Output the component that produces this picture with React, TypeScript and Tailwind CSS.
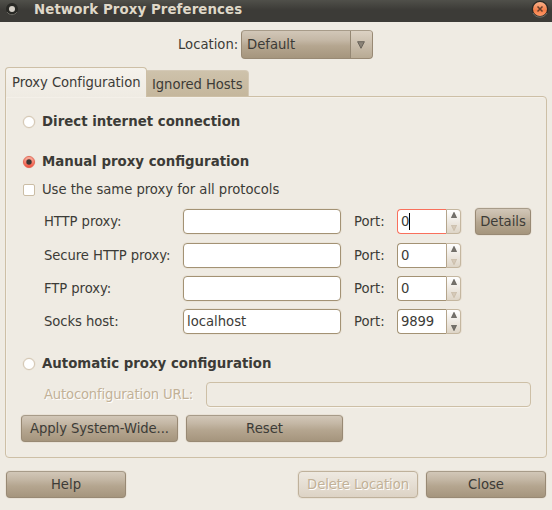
import type { ReactNode } from "react";

function Button({ children, className = "", disabled = false }: { children: ReactNode; className?: string; disabled?: boolean }) {
  const tone = disabled
    ? "border-[#bfb19b] bg-gradient-to-b from-[#eee9e1] to-[#ddd3c5] text-[#c2b197] tracking-[-0.1px] [text-shadow:1px_1px_0_#fff]"
    : "border-[#988974] border-t-[#a79b89] bg-[linear-gradient(#d2c7b8_0%,#c4b7a5_30%,#b5a690_55%,#a5957d_100%)] text-[#3c3b37]";
  return (
    <button className={`flex h-[27px] shrink-0 items-center justify-center rounded-[4px] border whitespace-nowrap shadow-[0_0_0_1px_#e9e2d7] ${tone} ${className}`}>
      {children}
    </button>
  );
}

function Radio({ checked = false }: { checked?: boolean }) {
  return (
    <svg className="h-[14px] w-[14px] shrink-0" viewBox="0 0 14 14">
      <defs>
        <linearGradient id="radioFill" x1="0" y1="0" x2="0" y2="1">
          <stop offset="0" stopColor="#f9b5a5" />
          <stop offset="1" stopColor="#f3503c" />
        </linearGradient>
      </defs>
      <circle cx="7" cy="7" r="6.5" fill="#e5ddd0" />
      <circle cx="7" cy="7" r="5.5" fill={checked ? "url(#radioFill)" : "#fff"} stroke={checked ? "#e35d4d" : "#d0c2ad"} strokeWidth="0.9" />
      {checked && <circle cx="7" cy="7" r="2.7" fill="#3c3634" />}
    </svg>
  );
}

function ChoiceHeading({ children, checked = false }: { children: ReactNode; checked?: boolean }) {
  return (
    <div className="flex h-[20px] items-center gap-[6px] pl-px text-[13.33px] font-bold">
      <Radio checked={checked} />
      <span>{children}</span>
    </div>
  );
}

function Arrow({ up = false, dim = false }: { up?: boolean; dim?: boolean }) {
  return (
    <svg className="h-[6px] w-[6px]" viewBox="0 0 6 6">
      <path d={up ? "M3 .3 5.6 5.7H.4Z" : "M3 5.7 5.6.3H.4Z"} fill={dim ? "#d5c9b8" : "#77736c"} stroke={dim ? "#c2b49d" : "#4e4b46"} strokeWidth="0.6" />
    </svg>
  );
}

function ProxyRow({ label, host = "", port, focused = false }: { label: string; host?: string; port: string; focused?: boolean }) {
  return (
    <div className="flex h-[25px] items-center">
      <span className="w-[139px] shrink-0 tracking-[-0.07px] whitespace-nowrap">{label}</span>
      <div className="flex h-[25px] w-[158px] shrink-0 items-center rounded-[4px] border border-[#a39274] bg-white pl-[3px] shadow-[0_0_0_1px_#eae4d9]">{host}</div>
      <span className="ml-[13px] w-[43px] shrink-0">Port:</span>
      <div className={`flex h-[25px] w-[49px] shrink-0 items-center rounded-l-[4px] border border-r-0 bg-white pl-[3px] ${focused ? "border-[#f9705c]" : "border-[#a39274]"}`}>
        <span className="tracking-[-0.15px]">{port}</span>
        {focused && <i className="h-[17px] w-px bg-black" />}
      </div>
      <div className="flex h-[25px] w-[15px] shrink-0 flex-col items-center justify-between rounded-r-[4px] border border-[#c4b69f] border-l-[#b5a58c] bg-gradient-to-b from-white to-[#ded5c7] pt-[2px] pb-[2px] shadow-[1px_0_0_#e8e0d4]">
        <Arrow up />
        <Arrow dim={port === "0"} />
      </div>
      {focused && <Button className="ml-[14px] w-[56px]">Details</Button>}
    </div>
  );
}

export default function App() {
  return (
    <div className="h-[510px] w-[552px] overflow-hidden bg-[#efebe3] font-['DejaVu_Sans',sans-serif] text-[13.2px] leading-[18px] text-[#3c3b37]">
      <header className="flex h-[22px] items-center bg-[linear-gradient(#50504a,#3c3b37_45%,#3c3b37)] pb-[4px] pl-[6px] text-[13.33px] font-bold text-[#dfd8c8]">
        <svg className="h-[14px] w-[14px]" viewBox="0 0 14 14">
          <circle cx="6" cy="7" r="6" fill="#292925" />
          <path d="M1 10a6 6 0 0 0 10 0" fill="none" stroke="#6b6962" />
          <circle cx="6" cy="7" r="3" fill="#d5d0c7" />
        </svg>
        <span className="ml-[14px] grow pt-[2px] tracking-[0.1px] whitespace-nowrap">Network Proxy Preferences</span>
        <svg className="mr-[3px] h-[18px] w-[18px] shrink-0" viewBox="0 0 18 18">
          <defs>
            <linearGradient id="closeFill" x1="0" y1="0" x2="0" y2="1">
              <stop offset="0" stopColor="#f9b18a" /><stop offset=".6" stopColor="#f47d48" /><stop offset="1" stopColor="#ff9a68" />
            </linearGradient>
          </defs>
          <circle cx="9" cy="9" r="8.3" fill="#292925" />
          <path d="M2 13a8 8 0 0 0 14 0" fill="none" stroke="#77736b" />
          <circle cx="9" cy="9" r="7" fill="url(#closeFill)" />
          <path d="m6.5 6.5 5 5m0-5-5 5" stroke="#653d2b" strokeWidth="1.5" />
        </svg>
      </header>

      <div className="mt-[8px] flex h-[29px] items-center pl-[178px]">
        <span className="w-[63px]">Location:</span>
        <div className="flex h-[29px] w-[132px] overflow-hidden rounded-[4px] border border-[#988974] border-t-[#a79b89] bg-[linear-gradient(#d2c7b8,#c4b7a5_35%,#b5a690_55%,#a5957d)]">
          <span className="flex grow items-center pl-[5px]">Default</span>
          <span className="flex w-[22px] items-center justify-center border-l border-[#948773] bg-gradient-to-b from-[#dcd2c4] to-[#b8aa94] pr-[2px]">
            <svg className="h-[8px] w-[8px]" viewBox="0 0 8 8"><path d="M.6.7h6.8L4 7.3Z" fill="#8b8377" stroke="#625c53" strokeWidth=".9" /></svg>
          </span>
        </div>
      </div>

      <nav className="relative z-10 mt-[8px] flex h-[30px] items-end pl-[5px]">
        <span className="flex h-[30px] w-[142px] items-center rounded-t-[4px] border border-b-0 border-[#cdbfa6] bg-gradient-to-b from-[#f5f2ec] to-[#efebe3] pl-[6px] tracking-[-0.07px] whitespace-nowrap">Proxy Configuration</span>
        <span className="mb-px flex h-[26px] w-[102px] items-center rounded-tr-[4px] border border-b-0 border-l-0 border-[#d4c9b6] bg-gradient-to-b from-[#cec2ab] to-[#c5b79d] pt-[3px] pl-[5px] tracking-[-0.07px] whitespace-nowrap">Ignored Hosts</span>
      </nav>

      <main className="-mt-px ml-[5px] h-[362px] w-[542px] rounded-[4px] rounded-tl-none border border-[#cdbfa6] pt-[15px] pl-[15px] shadow-[inset_1px_1px_0_#f4f0e9]">
        <ChoiceHeading>Direct internet connection</ChoiceHeading>
        <div className="mt-[20px]"><ChoiceHeading checked>Manual proxy configuration</ChoiceHeading></div>
        <div className="mt-[8px] flex h-[20px] items-center gap-[7px] pl-[2px]">
          <i className="h-[12px] w-[12px] rounded-[2px] border border-[#cbbda5] bg-white" />
          <span className="tracking-[-0.03px]">Use the same proxy for all protocols</span>
        </div>
        <div className="mt-[9px] flex flex-col gap-[8px] pl-[23px]">
          <ProxyRow label="HTTP proxy:" port="0" focused />
          <div className="mt-px"><ProxyRow label="Secure HTTP proxy:" port="0" /></div>
          <ProxyRow label="FTP proxy:" port="0" />
          <ProxyRow label="Socks host:" host="localhost" port="9899" />
        </div>
        <div className="mt-[20px]"><ChoiceHeading>Automatic proxy configuration</ChoiceHeading></div>
        <div className="mt-[8px] flex h-[25px] items-center pl-[23px] text-[#c2b197] [text-shadow:1px_1px_0_#fff]">
          <span className="w-[162px] tracking-[-0.18px] whitespace-nowrap">Autoconfiguration URL:</span>
          <div className="h-[25px] w-[325px] rounded-[4px] border border-[#cdbfa6] shadow-[0_1px_0_#f8f5ef]" />
        </div>
        <div className="mt-[8px] flex gap-[8px]">
          <Button className="w-[157px] tracking-[-0.07px]">Apply System-Wide...</Button>
          <Button className="w-[157px]">Reset</Button>
        </div>
      </main>

      <footer className="mt-[13px] flex gap-[8px] pl-[6px]">
        <Button className="w-[120px]">Help</Button>
        <Button disabled className="ml-[164px] w-[120px]">Delete Location</Button>
        <Button className="w-[120px]">Close</Button>
      </footer>
    </div>
  );
}
